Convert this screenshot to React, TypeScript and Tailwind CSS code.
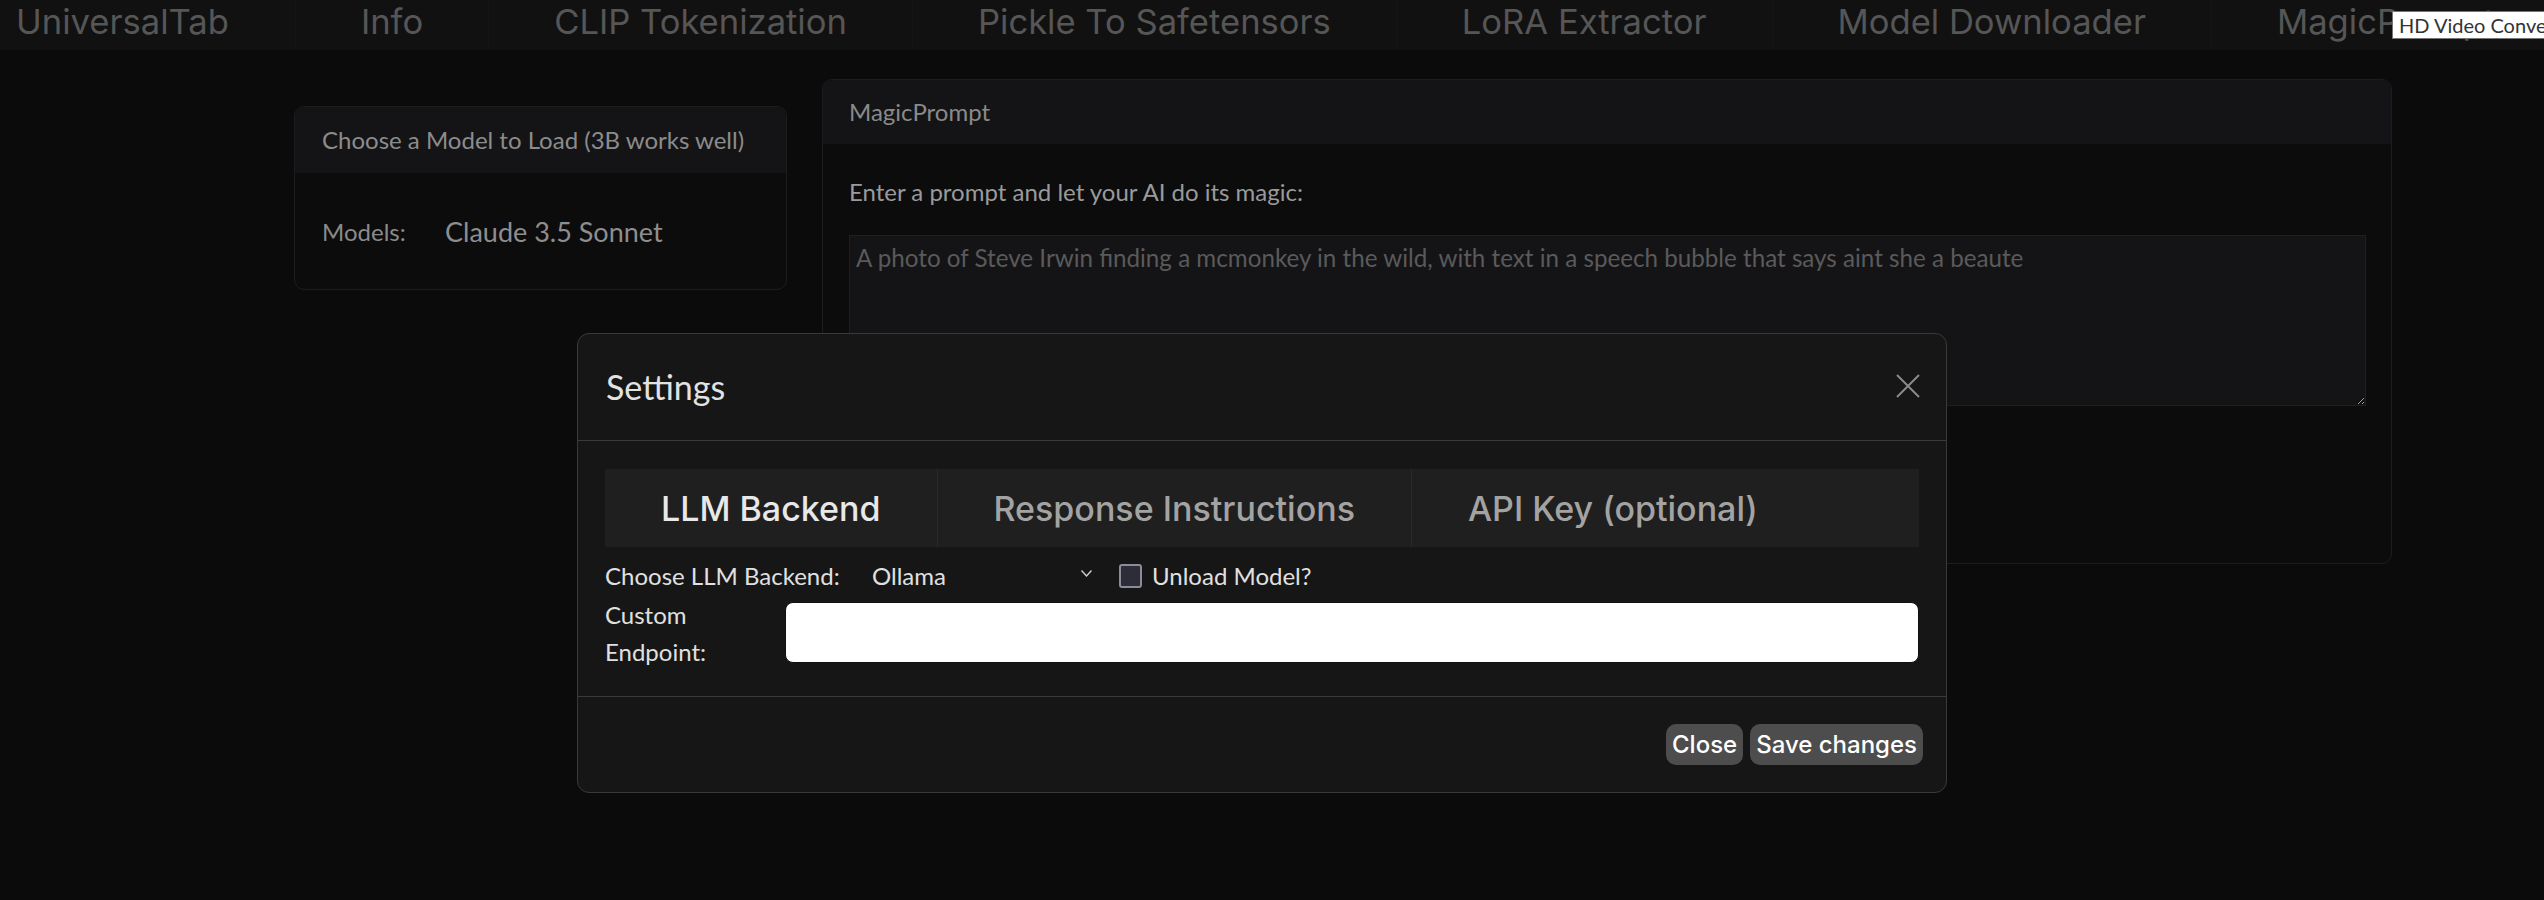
import React from 'react';

const topTabs = [
  'UniversalTab',
  'Info',
  'CLIP Tokenization',
  'Pickle To Safetensors',
  'LoRA Extractor',
  'Model Downloader',
  'MagicPrompt',
  'Settings',
];

const modalTabs = ['LLM Backend', 'Response Instructions', 'API Key (optional)'];

const ui = { fontFamily: 'Inter, "Noto Sans", sans-serif' };
const seg = { fontFamily: 'Lato, "Open Sans", sans-serif' };

function TopBar() {
  return (
    <div className="flex h-[50px] bg-[#111111] overflow-hidden whitespace-nowrap" style={ui}>
      {topTabs.map((t, i) => (
        <div
          key={t}
          className={
            i === 0
              ? 'flex items-center pl-[16px] pr-[66px] pb-[6px] text-[34.6px] text-[#565656] shrink-0'
              : 'flex items-center px-[65px] pb-[6px] text-[34.6px] text-[#565656] border-l border-[#151515] shrink-0'
          }
        >
          {t}
        </div>
      ))}
    </div>
  );
}

function ModelCard() {
  return (
    <div className="mt-[56px] w-[493px] h-[184px] rounded-[10px] border border-[#1d1d20] bg-[#0c0c0d] overflow-hidden flex flex-col" style={seg}>
      <div className="h-[66px] bg-[#141416] px-[27px] flex items-center text-[24px] text-[#8c8c8c]">
        Choose a Model to Load (3B works well)
      </div>
      <div className="flex-1 flex items-center px-[27px] pt-[2px]">
        <span className="text-[24px] text-[#8a8a8a] w-[123px]">Models:</span>
        <span className="text-[27px] text-[#8e8e8e]">Claude 3.5 Sonnet</span>
      </div>
    </div>
  );
}

function PromptCard() {
  return (
    <div className="mt-[29px] ml-[35px] w-[1570px] h-[485px] rounded-[10px] border border-[#1d1d20] bg-[#0c0c0d] overflow-hidden" style={seg}>
      <div className="h-[64px] bg-[#141416] px-[26px] flex items-center text-[24px] text-[#8a8a8a]">
        MagicPrompt
      </div>
      <div className="px-[26px] pt-[33px]">
        <div className="text-[24px] text-[#9a9a9a] leading-[30px]">Enter a prompt and let your AI do its magic:</div>
        <textarea
          className="mt-[28px] block w-[1517px] h-[171px] bg-[#141416] border border-[#1f1f23] px-[6px] py-[4px] text-[24.2px] text-[#c0c0c0] placeholder:text-[#5a5a5a] outline-none"
          style={seg}
          placeholder="A photo of Steve Irwin finding a mcmonkey in the wild, with text in a speech bubble that says aint she a beaute"
        />
      </div>
    </div>
  );
}

function SettingsModal() {
  return (
    <div className="absolute left-[577px] top-[333px] w-[1370px] rounded-[12px] border border-[#3a3a3a] bg-[#161616]">
      <div className="h-[107px] flex items-center justify-between pl-[28px] pr-[26px] border-b border-[#3b3b3b]">
        <span className="text-[34px] text-[#e2e2e2] leading-none" style={seg}>Settings</span>
        <svg width="24" height="24" viewBox="0 0 24 24" className="mt-[-2px]">
          <path d="M1 1 L23 23 M23 1 L1 23" stroke="#8a8a8a" strokeWidth="2" fill="none" />
        </svg>
      </div>
      <div className="px-[27px] pt-[28px] pb-[26px]">
        <div className="flex h-[78px] bg-[#1f1f1f]" style={ui}>
          {modalTabs.map((t, i) => (
            <div
              key={t}
              className={
                i === 0
                  ? 'flex items-center px-[56px] text-[34px] font-medium text-[#e8e8e8] border-r border-[#2a2a2a]'
                  : i === 1
                  ? 'flex items-center px-[56px] text-[34px] font-medium text-[#a3a3a3] border-r border-[#2a2a2a]'
                  : 'flex items-center px-[56px] text-[34px] font-medium text-[#a3a3a3]'
              }
            >
              {t}
            </div>
          ))}
        </div>
        <div className="mt-[14px] h-[30px] flex items-center text-[24px] text-[#e0e0e0]" style={seg}>
          <span className="w-[267px]">Choose LLM Backend:</span>
          <span className="w-[209px]">Ollama</span>
          <svg width="11" height="7" viewBox="0 0 11 7" className="mt-[-6px]">
            <path d="M0.5 0.5 L5.5 6 L10.5 0.5" stroke="#d0d0d0" strokeWidth="1.4" fill="none" />
          </svg>
          <span className="ml-[27px] w-[23px] h-[24px] rounded-[3px] border-2 border-[#8b8b9b] bg-[#2d2d38]" />
          <span className="ml-[10px]">Unload Model?</span>
        </div>
        <div className="mt-[5px] flex items-start" style={seg}>
          <div className="w-[180px] text-[24px] leading-[37px] text-[#e0e0e0]">
            Custom
            <br />
            Endpoint:
          </div>
          <input className="mt-[6px] flex-1 h-[61px] bg-white rounded-[8px] border border-[#101010] outline-none" />
        </div>
      </div>
      <div className="h-[96px] border-t border-[#3b3b3b] flex items-center justify-end gap-[7px] pr-[23px]" style={ui}>
        <button className="h-[41px] px-[6px] rounded-[10px] bg-[#4d4d4d] text-[24px] font-medium text-white">Close</button>
        <button className="h-[41px] px-[6px] rounded-[10px] bg-[#4d4d4d] text-[24px] font-medium text-white">Save changes</button>
      </div>
    </div>
  );
}

export default function App() {
  return (
    <div className="relative w-[2544px] h-[900px] bg-[#0b0b0b] overflow-hidden">
      <TopBar />
      <div className="flex items-start pl-[294px]">
        <ModelCard />
        <PromptCard />
      </div>
      <SettingsModal />
      <div
        className="absolute left-[2392px] top-[11px] h-[28px] pl-[6px] pr-[8px] flex items-center bg-white border border-[#767676] text-[20px] text-[#333333] whitespace-nowrap"
        style={seg}
      >
        HD Video Converter
      </div>
    </div>
  );
}
